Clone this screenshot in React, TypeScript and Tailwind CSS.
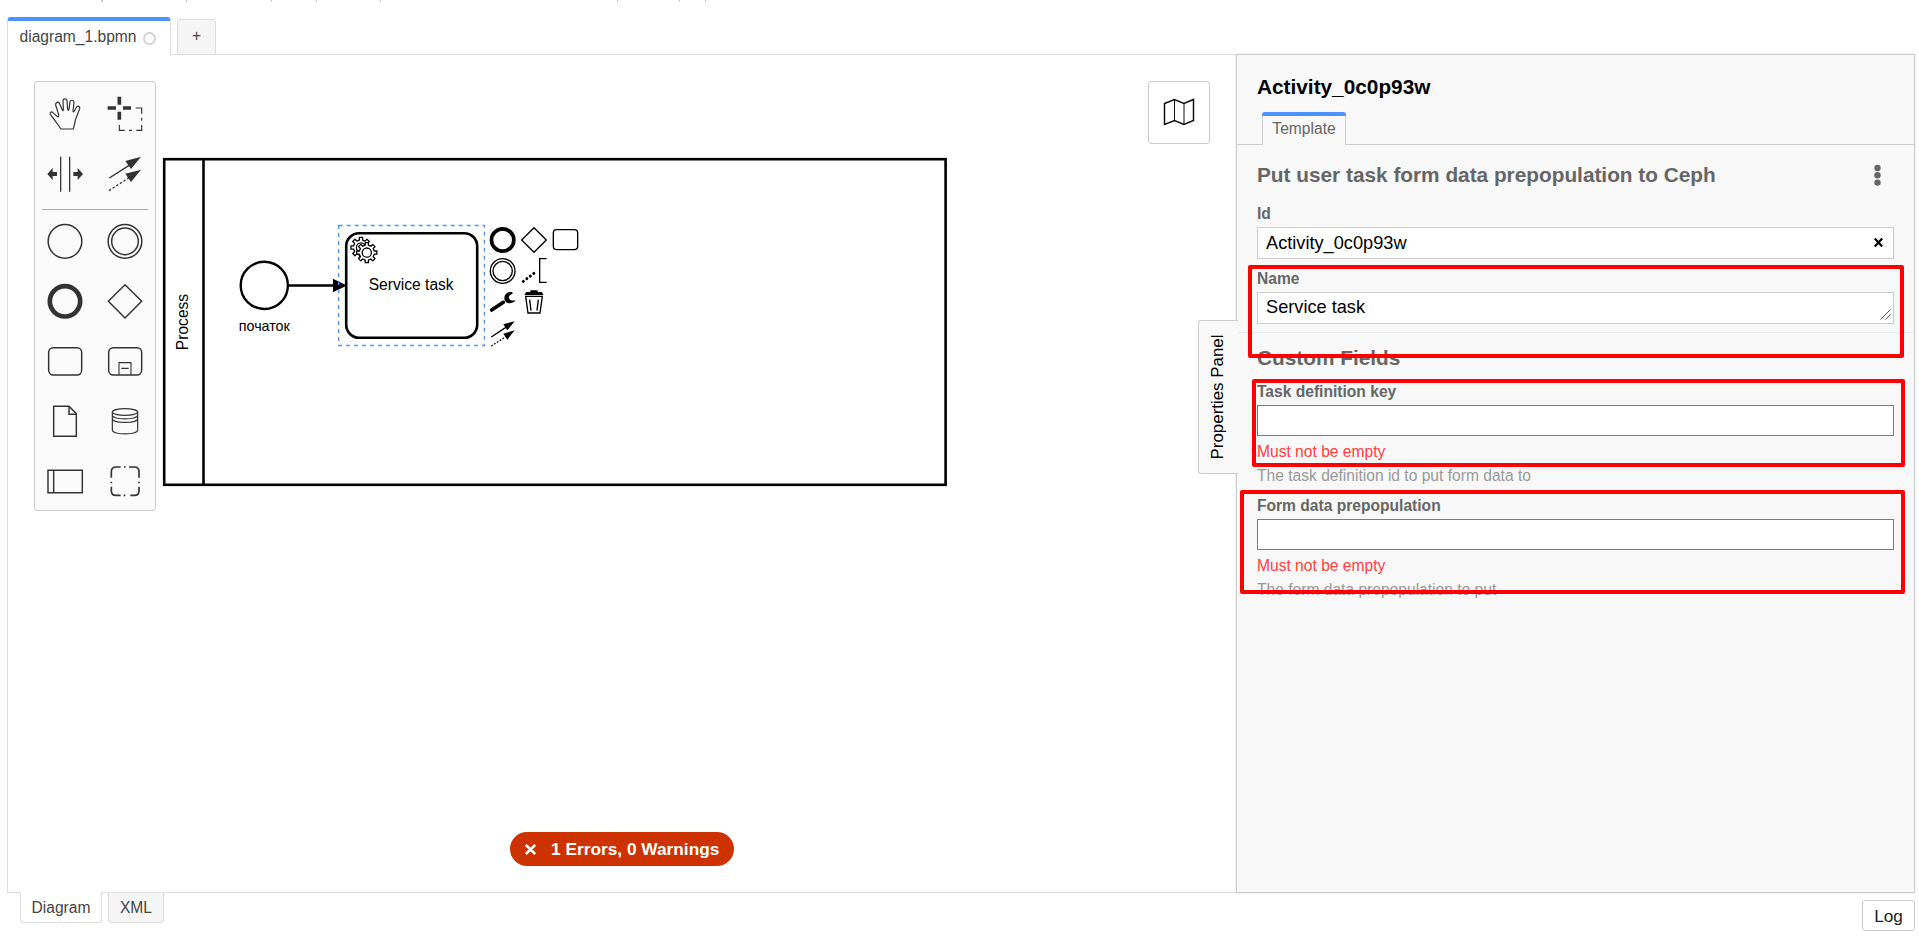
import type { ReactNode } from 'react';

const INK = '#333';

function gear(cx: number, cy: number, outer: number, root: number, teeth = 8): string {
  const step = (Math.PI * 2) / teeth;
  const pts: string[] = [];
  for (let i = 0; i < teeth; i++) {
    const a = i * step;
    const corners: [number, number][] = [
      [root, -0.27],
      [outer, -0.2],
      [outer, 0.2],
      [root, 0.27],
    ];
    corners.forEach(([r, k]) => {
      const t = a + k * step;
      pts.push(`${(cx + r * Math.cos(t)).toFixed(2)},${(cy + r * Math.sin(t)).toFixed(2)}`);
    });
  }
  return `M${pts.join('L')}Z`;
}

function Entry({ box, children }: { box: string; children: ReactNode }) {
  return (
    <svg className="size-[60px]" viewBox={box} fill="none" stroke={INK} strokeWidth="4.4">
      {children}
    </svg>
  );
}

function Palette() {
  return (
    <div className="absolute left-[26px] top-[26px] w-[122px] h-[430px] rounded-[3px] border border-[#ccc] bg-[#fafafa] pt-[2px]">
      <div className="grid grid-cols-2">
        <Entry box="45 43 180 180">
          <path
            strokeWidth="3.6"
            strokeLinejoin="round"
            d="M123 178L105 153L91 134C89 129 94 125 98 128L112 141Q117 143 116 135L107 106C106 98 115 95 118 101L127 121Q130 126 130 119L129 93C130 86 139 86 141 93L143 119Q145 125 147 119L150 96C152 90 161 90 162 98L159 124Q160 130 163 124L170 112C173 107 181 110 179 117L168 146Q166 150 165 157L160 178Z"
          />
        </Entry>
        <Entry box="225 43 180 180">
          <path strokeWidth="11" d="M298 81V105M298 126V150M263 115H288M309 115H333" />
          <path strokeWidth="3.5" d="M347 115H365V132M365 144V153M365 166V182H349M336 182H327M314 182H298V166" />
        </Entry>
        <Entry box="45 223 180 180">
          <path strokeWidth="3.8" d="M122 261V366M149 261V366" />
          <path fill={INK} stroke="none" d="M82 313L98 295V307H111V319H98V331ZM189 313L173 295V307H160V319H173V331Z" />
        </Entry>
        <Entry box="225 223 180 180">
          <path strokeWidth="4" d="M268 325L332 284" />
          <path strokeWidth="4" strokeDasharray="7 6" d="M267 363L330 322" />
          <path fill={INK} stroke="none" d="M363 261L316 274L333 298ZM363 300L316 312L333 337Z" />
        </Entry>
      </div>
      <div className="mx-[7px] mt-[5px] mb-px h-px bg-[#aaa]" />
      <div className="grid grid-cols-2">
        <Entry box="45 423 180 180">
          <circle cx="135" cy="514" r="50.5" />
        </Entry>
        <Entry box="225 423 180 180">
          <circle cx="315" cy="514" r="50.5" />
          <circle cx="315" cy="514" r="40" />
        </Entry>
        <Entry box="45 -57 180 180">
          <circle cx="135" cy="34" r="45.5" strokeWidth="14" />
        </Entry>
        <Entry box="225 -57 180 180">
          <path d="M315 -16L365 34L315 84L265 34Z" />
        </Entry>
        <Entry box="45 123 180 180">
          <rect x="86" y="173" width="99" height="82" rx="14" />
        </Entry>
        <Entry box="225 123 180 180">
          <rect x="266" y="173" width="99" height="82" rx="14" />
          <path strokeWidth="3.3" d="M297 255V218H333V255M304 235H326" />
        </Entry>
        <Entry box="45 303 180 180">
          <path d="M101 349H147L169 371V439H101Z" />
          <path d="M147 349V373H169" />
        </Entry>
        <Entry box="225 303 180 180">
          <ellipse cx="315" cy="366" rx="38" ry="10" strokeWidth="3.5" />
          <path strokeWidth="3.5" d="M277 366V421C277 435 353 435 353 421V366M277 376C277 390 353 390 353 376M277 386C277 401 353 401 353 386" />
        </Entry>
        <Entry box="45 483 180 180">
          <path d="M84 541H187V608H84ZM101 541V608" />
        </Entry>
        <Entry box="225 483 180 180">
          <path
            strokeWidth="5"
            d="M274 563V545Q274 531 288 531H302M312 531H317M327 531H343Q357 531 357 545V563M357 575V580M357 590V602Q357 616 343 616H331M316 616H311M302 616H288Q274 616 274 602V590M274 580V575"
          />
        </Entry>
      </div>
    </div>
  );
}

function Diagram() {
  return (
    <svg
      className="block h-[838px] w-[1228px]"
      viewBox="8 55 1228 838"
      fill="none"
      stroke="#000"
      fontFamily='"Liberation Sans", Arial, sans-serif'
    >
      <rect x="164.2" y="159.2" width="781.4" height="325.6" strokeWidth="2.6" />
      <path d="M203.5 159V485" strokeWidth="2.6" />
      <text
        transform="translate(187.5 322) rotate(-90)"
        textAnchor="middle"
        fontSize="15.6"
        fill="#000"
        stroke="none"
      >
        Process
      </text>

      <circle cx="264.3" cy="285.4" r="23.6" strokeWidth="2.4" />
      <text x="264.3" y="331" textAnchor="middle" fontSize="14.3" fill="#000" stroke="none">
        початок
      </text>

      <path d="M289 285.5H335" strokeWidth="2.6" />
      <path d="M333 278.7L347 285.5L333 292.3Z" fill="#000" stroke="none" />

      <rect x="346.2" y="233.2" width="131" height="104.6" rx="13" strokeWidth="2.6" />
      <g strokeWidth="1.3" fill="#fff" strokeLinejoin="round">
        <path d={gear(361, 247.5, 10.2, 7.6)} />
        <circle cx="361" cy="247.5" r="4.6" />
        <path d={gear(366.8, 252.6, 10.2, 7.6)} />
        <circle cx="366.8" cy="252.6" r="4.6" />
      </g>
      <text x="411.2" y="289.8" textAnchor="middle" fontSize="15.6" fill="#000" stroke="none">
        Service task
      </text>
      <rect
        x="338.7"
        y="225.5"
        width="145.7"
        height="120"
        stroke="#4d90ff"
        strokeWidth="1.3"
        strokeDasharray="4 4"
      />

      <g transform="translate(220 210) scale(0.33333)" strokeWidth="4">
        <circle cx="848" cy="90" r="33.5" strokeWidth="11" />
        <path d="M942 53L979 90L942 127L905 90Z" />
        <rect x="1000" y="59" width="73" height="60" rx="10" />
        <circle cx="848" cy="183" r="37" />
        <circle cx="848" cy="183" r="29" />
        <path d="M980 146H959V217H980" />
        <path d="M910 214L951 183" strokeWidth="9" strokeLinecap="round" strokeDasharray="0.1 13" />
        <path d="M815 300L850 277" strokeWidth="11" strokeLinecap="round" />
        <path
          stroke="none"
          fill="#000"
          d="M877 247C865 243 854 251 853 264C853 274 861 281 871 280C878 279 884 276 887 271C877 273 869 271 867 264C866 258 870 254 878 251Z"
        />
        <path d="M917 259H967L960 309H924ZM929 269L933 302M955 269L951 302" strokeWidth="4" />
        <path stroke="none" fill="#000" d="M913 255L919 246H931V241H953V246H965L971 255Z" />
        <path d="M814 381L862 349" />
        <path d="M814 408L862 377" strokeDasharray="5 5" />
        <path stroke="none" fill="#000" d="M884 334L850 343L862 361ZM884 361L850 371L862 389Z" />
      </g>
    </svg>
  );
}

function Minimap() {
  return (
    <div className="absolute left-[1140px] top-[26px] flex h-[63px] w-[62px] items-center justify-center rounded-[3px] border border-[#ccc] bg-white">
      <svg className="h-[28px] w-[32px] -translate-y-px" viewBox="0 0 32 28" fill="none" stroke="#111">
        <path strokeWidth="1.5" d="M1.5 5.5L11.5 1.5L21 5.5L30.5 1.5V22.5L21 26.5L11.5 22.5L1.5 26.5Z" />
        <path strokeWidth="1" d="M11.5 1.5V22.5M21 5.5V26.5" />
      </svg>
    </div>
  );
}

function Label({ children, gap }: { children: ReactNode; gap: string }) {
  return <div className={`${gap} h-5 text-[15.6px] font-bold leading-5 text-[#666]`}>{children}</div>;
}

function RequiredField({ label, hint, gap }: { label: string; hint: string; gap: string }) {
  return (
    <>
      <Label gap={gap}>{label}</Label>
      <div className="mt-[3px] h-[31px] border border-[#f44] bg-white" />
      <div className="mt-[6px] h-5 text-[15.6px] leading-5 text-[#ff4040]">Must not be empty</div>
      <div className="mt-[4px] h-5 text-[15.6px] leading-5 text-[#999]">{hint}</div>
    </>
  );
}

function PropertiesPanel() {
  return (
    <aside className="relative h-[839px] w-[679px] border border-[#ccc] bg-[#f8f8f8] pt-5 shadow-[0_0_2px_rgba(0,0,0,0.15)]">
      <div className="absolute -left-[39px] top-[265px] flex h-[154px] w-[40px] items-center justify-center rounded-l-[3px] border border-r-0 border-[#ccc] bg-[#f8f8f8]">
        <span className="-rotate-90 whitespace-nowrap text-[16.9px] leading-5 text-black">Properties Panel</span>
      </div>

      <h1 className="ml-5 h-6 text-[20.8px] font-bold leading-6 text-black">Activity_0c0p93w</h1>
      <div className="mt-[13px] flex h-[33px]">
        <div className="w-[25px] border-b border-[#ccc]" />
        <div className="w-[84px] rounded-t-[3px] border-x border-[#ccc]">
          <div className="-mx-px h-[4px] rounded-t-[3px] bg-[#4d90ff]" />
          <div className="pt-[3px] text-center text-[15.6px] leading-5 text-[#666]">Template</div>
        </div>
        <div className="flex-1 border-b border-[#ccc]" />
      </div>

      <div className="ml-5 mr-5">
        <div className="mt-[18px] flex h-6 items-center justify-between pr-[13px]">
          <h2 className="whitespace-nowrap text-[20.8px] font-bold leading-6 text-[#666]">
            Put user task form data prepopulation to Ceph
          </h2>
          <svg className="h-[22px] w-[7px]" viewBox="0 0 7 22" fill="#666">
            <circle cx="3.5" cy="4" r="3.2" />
            <circle cx="3.5" cy="11.3" r="3.2" />
            <circle cx="3.5" cy="18.6" r="3.2" />
          </svg>
        </div>
        <Label gap="mt-[17px]">Id</Label>
        <div className="mt-[3px] flex h-[32px] items-center justify-between border border-[#ccc] bg-white pl-[8px] pr-[10px] pb-px">
          <span className="text-[18.2px] leading-6">Activity_0c0p93w</span>
          <svg className="size-[9px]" viewBox="0 0 9 9" stroke="#000" strokeWidth="2.2">
            <path d="M0.8 0.5L8.2 8.5M8.2 0.5L0.8 8.5" />
          </svg>
        </div>
        <Label gap="mt-[10px]">Name</Label>
        <div className="mt-[3px] flex h-[32px] items-end justify-between border border-[#ccc] bg-white pl-[8px] pr-[2px] pb-[3px]">
          <span className="pb-px text-[18.2px] leading-6">Service task</span>
          <svg className="size-[11px]" viewBox="0 0 11 11" stroke="#555" strokeWidth="1">
            <path d="M0.5 10.5L10.5 0.5M5.5 10.5L10.5 5.5" />
          </svg>
        </div>
      </div>
      <div className="ml-px mt-[8px] h-px bg-[#eaeaea]" />
      <div className="ml-5 mr-5">
        <h2 className="mt-[13px] h-6 text-[20.8px] font-bold leading-6 text-[#666]">Custom Fields</h2>
        <RequiredField gap="mt-[12px]" label="Task definition key" hint="The task definition id to put form data to" />
        <RequiredField gap="mt-[10px]" label="Form data prepopulation" hint="The form data prepopulation to put" />
      </div>

      <div className="absolute left-[11px] top-[210px] h-[93px] w-[656px] rounded-[2px] border-4 border-[#f00]" />
      <div className="absolute left-[15px] top-[324px] h-[88px] w-[653px] rounded-[2px] border-4 border-[#f00]" />
      <div className="absolute left-[3px] top-[435px] h-[104px] w-[665px] rounded-[2px] border-4 border-[#f00]" />
    </aside>
  );
}

export default function App() {
  return (
    <div className="flex h-[936px] w-[1919px] flex-col overflow-hidden bg-white font-['Liberation_Sans',Arial,sans-serif] text-black">
      <div className="flex h-[17px] items-start">
        <div className="ml-[101px] h-[2px] w-[2px] bg-[#ccc]" />
        <div className="ml-[83px] h-[2px] w-px bg-[#ccc]" />
        <div className="ml-[84px] h-[2px] w-px bg-[#ccc]" />
        <div className="ml-[44px] h-[2px] w-px bg-[#ccc]" />
        <div className="ml-[63px] h-[2px] w-px bg-[#ccc]" />
        <div className="ml-[236px] h-[2px] w-px bg-[#ccc]" />
        <div className="ml-[61px] h-[2px] w-px bg-[#ccc]" />
        <div className="ml-[25px] h-[2px] w-px bg-[#ccc]" />
      </div>

      <div className="flex h-[38px] shrink-0 pl-[7px]">
        <div className="w-[164px] rounded-t-[3px] border-x border-[#ddd]">
          <div className="h-[4px] rounded-t-[2px] bg-[#4d90ff]" />
          <div className="flex items-center pl-[11.5px] pt-[6px]">
            <span className="text-[15.6px] leading-5 text-[#444]">diagram_1.bpmn</span>
            <svg className="ml-[6px] mt-[2px] size-[13px]" viewBox="0 0 13 13" fill="none" stroke="#ccc" strokeWidth="1.6">
              <circle cx="6.5" cy="6.5" r="5.6" />
            </svg>
          </div>
        </div>
        <div className="w-[6px] border-b border-[#ddd]" />
        <div className="mt-[2px] flex w-[39px] justify-center rounded-t-[3px] border border-[#ddd] bg-[#f5f5f5] pt-[6px] text-[15.6px] leading-5 text-[#444]">
          +
        </div>
        <div className="mr-[5px] flex-1 border-b border-[#ddd]" />
      </div>

      <div className="flex h-[838px] shrink-0 pl-[7px]">
        <main className="relative h-[838px] w-[1229px] overflow-hidden border-l border-[#ddd]">
          <Diagram />
          <Palette />
          <Minimap />
          <div className="absolute left-[502px] top-[777px] flex h-[34px] w-[224px] items-center rounded-full bg-[#cc3300] pl-[15px] text-white">
            <svg className="size-[11px]" viewBox="0 0 11 11" stroke="#fff" strokeWidth="2.6">
              <path d="M0.8 1L10.2 10M10.2 1L0.8 10" />
            </svg>
            <span className="ml-[15px] -mt-px whitespace-nowrap text-[17.3px] font-bold leading-5">1 Errors, 0 Warnings</span>
          </div>
        </main>
        <div className="-mt-px">
          <PropertiesPanel />
        </div>
      </div>

      <div className="-mt-px flex h-[44px] shrink-0 pl-[7px] text-[15.6px] leading-5 text-[#444]">
        <div className="h-px w-[13px] bg-[#ddd]" />
        <div className="relative h-[31px] w-[82px] rounded-b-[3px] border border-t-0 border-[#ddd] bg-white pt-[6px] text-center">
          Diagram
        </div>
        <div className="h-px w-[6px] bg-[#ddd]" />
        <div className="h-[31px] w-[56px] rounded-b-[3px] border border-[#ddd] bg-[#f5f5f5] pt-[5px] text-center">XML</div>
        <div className="h-px w-[1072px] bg-[#ddd]" />
        <div className="flex-1" />
        <button className="mr-[4px] mt-[8px] h-[31px] w-[53px] rounded-[3px] border border-[#ccc] bg-white text-[17.2px] leading-6 text-[#222]">
          Log
        </button>
      </div>
    </div>
  );
}
